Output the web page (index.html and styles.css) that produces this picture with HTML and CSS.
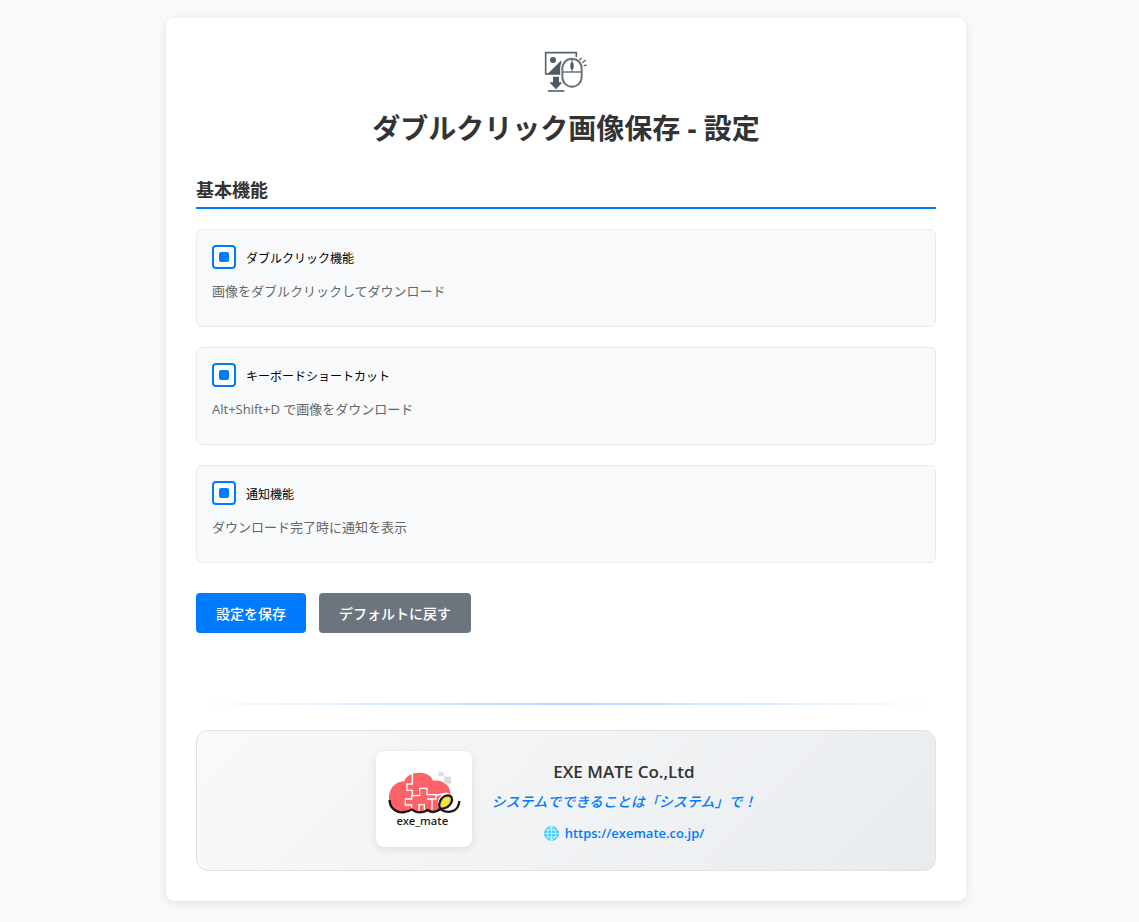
FILE: index.html
```html
<!DOCTYPE html>
<html lang="ja">
<head>
<meta charset="utf-8">
<meta name="viewport" content="width=device-width, initial-scale=1">
<title>ダブルクリック画像保存 - 設定</title>
<link rel="stylesheet" href="styles.css">
</head>
<body>
<main class="container">
  <header class="header">
    <svg class="app-icon" viewBox="21 24 144 144" fill="none" stroke="#5b656d" aria-hidden="true">
      <path d="M32 103V38H124V52" stroke-width="5"/>
      <path d="M31 102H80" stroke-width="5"/>
      <circle cx="54" cy="60" r="9" fill="#4f5b64" stroke="none"/>
      <path d="M38 102L79 61V102Z" fill="#4f5b64" stroke="none"/>
      <path d="M54 110H72V127H83L63 148L43 127H54Z" fill="#4f5b64" stroke="none"/>
      <path d="M39 153H88" stroke-width="5"/>
      <rect x="82" y="56" width="58" height="84" rx="29" fill="#fff" stroke="#fff" stroke-width="13"/>
      <rect x="82" y="56" width="58" height="84" rx="29" stroke="#6b747b" stroke-width="6"/>
      <path d="M82 96H140M111 56V96" stroke="#6b747b" stroke-width="4"/>
      <rect x="106" y="67" width="10" height="21" rx="5" fill="#4f5b64" stroke="none"/>
      <path d="M134 61L139 53M142 68L152 60M146 77L155 75" stroke-width="4"/>
    </svg>
    <h1 class="title">ダブルクリック画像保存 - 設定</h1>
  </header>

  <form class="settings">
    <h2 class="section-title">基本機能</h2>
    <div class="option">
      <label class="option-label"><input class="check" type="checkbox" checked>ダブルクリック機能</label>
      <p class="option-text">画像をダブルクリックしてダウンロード</p>
    </div>
    <div class="option">
      <label class="option-label"><input class="check" type="checkbox" checked>キーボードショートカット</label>
      <p class="option-text">Alt+Shift+D で画像をダウンロード</p>
    </div>
    <div class="option">
      <label class="option-label"><input class="check" type="checkbox" checked>通知機能</label>
      <p class="option-text">ダウンロード完了時に通知を表示</p>
    </div>
    <div class="actions">
      <button class="btn btn-primary" type="button">設定を保存</button>
      <button class="btn btn-secondary" type="button">デフォルトに戻す</button>
    </div>
  </form>

  <footer class="footer">
    <div class="company">
      <svg class="logo" viewBox="42 42 240 240" role="img" aria-label="exe_mate">
        <path d="M62 184C48 150 64 110 103 109C112 76 178 74 189 107C220 103 243 122 242 152L215 186C196 204 184 198 174 194C158 207 138 207 126 194C103 206 76 203 62 184Z" fill="#ff6266"/>
        <g fill="none" stroke="#fff" stroke-width="4">
          <path d="M127 84V117H111V136H127V154"/>
          <path d="M125 196V180H106V162H125V152H149V130H171V149H198V162H186V194"/>
          <path d="M147 197V179H163V196M171 162H186M198 151L232 144"/>
        </g>
        <path d="M206 80h15v14h-15zM222 95h21v21h-21z" fill="#dcdcdc"/>
        <ellipse cx="226" cy="172" rx="22" ry="29" fill="#fff" transform="rotate(20 226 172)"/>
        <path d="M214 189C207 170 221 149 238 153C252 162 235 190 214 189Z" fill="#f4e43b"/>
        <path d="M59 165C58 188 80 206 103 201Q116 200 125 193Q147 210 173 195Q191 208 211 192C250 189 254 152 235 151C211 151 201 183 214 194C232 206 266 203 268 168" fill="none" stroke="#1f1615" stroke-width="7" stroke-linejoin="round"/>
        <text class="logo-text" x="157" y="240" text-anchor="middle">exe_mate</text>
      </svg>
      <div class="company-info">
        <h3 class="company-name">EXE MATE Co.,Ltd</h3>
        <p class="slogan">システムでできることは「システム」で！</p>
        <a class="link" href="https://exemate.co.jp/">
          <svg class="globe" viewBox="0 0 30 30" fill="none" aria-hidden="true">
            <circle cx="15" cy="15" r="14" fill="#50c8fa" stroke="#2ea7d6" stroke-width="1"/>
            <path d="M15 1V29M1 15H29M4 8H26M4 22H26M15 1C4 8 4 22 15 29C26 22 26 8 15 1Z" stroke="#d4f4ff" stroke-width="2"/>
          </svg>https://exemate.co.jp/</a>
      </div>
    </div>
  </footer>
</main>
</body>
</html>
```
FILE: styles.css
```css
* { box-sizing: border-box; }
body {
  margin: 0;
  padding: 18px 27px 20px 20px;
  background: #f8f9fa;
  color: #333;
  font-family: "Open Sans", "Noto Sans CJK JP", sans-serif;
}
h1, h2, h3, p { margin: 0; }
.container {
  max-width: 800px;
  margin: 0 auto;
  padding: 30px;
  background: #fff;
  border-radius: 8px;
  box-shadow: 0 2px 10px rgba(0, 0, 0, 0.1);
}
.header { text-align: center; margin-bottom: 30px; }
.app-icon { display: block; width: 48px; height: 48px; margin: 0 auto 12px; }
.title { font-size: 28px; line-height: 40px; font-weight: 700; }
.section-title {
  margin-bottom: 20px;
  padding-bottom: 4px;
  border-bottom: 2px solid #007bff;
  font-size: 18px;
  line-height: 25px;
  font-weight: 700;
}
.option {
  margin-bottom: 20px;
  padding: 15px 15px 25px;
  background: #f8f9fa;
  border: 1px solid #e9ecef;
  border-radius: 6px;
}
.option-label {
  display: flex;
  align-items: flex-end;
  gap: 10px;
  margin-bottom: 12px;
  color: #000;
  font-size: 12px;
  line-height: 20px;
}
.check {
  display: grid;
  place-content: center;
  appearance: none;
  width: 24px;
  height: 24px;
  margin: 0;
  background: #fff;
  border: 2px solid #007bff;
  border-radius: 4px;
}
.check:checked::before {
  content: "";
  width: 10px;
  height: 10px;
  background: #007bff;
  border-radius: 2px;
}
.option-text { color: #666; font-size: 13px; line-height: 20px; }
.actions { display: flex; gap: 13px; margin-top: 30px; }
.btn {
  padding: 11px 20px 9px;
  border: 0;
  border-radius: 4px;
  color: #fff;
  font-family: inherit;
  font-size: 14px;
  line-height: 20px;
  font-weight: 500;
}
.btn-primary { background: #007bff; }
.btn-secondary { background: #6c757d; }
.footer { margin-top: 70px; }
.footer::before {
  content: "";
  display: block;
  height: 2px;
  margin-bottom: 25px;
  background: linear-gradient(90deg, transparent, #007bff, transparent);
  opacity: 0.3;
}
.company {
  display: flex;
  justify-content: center;
  align-items: flex-start;
  gap: 20px;
  padding: 20px 20px 23px;
  background: linear-gradient(135deg, #f8f9fa, #e9ecef);
  border: 1px solid #dee2e6;
  border-radius: 12px;
}
.logo {
  width: 96px;
  height: 96px;
  padding: 8px;
  background: #fff;
  border-radius: 8px;
  box-shadow: 0 2px 8px rgba(0, 0, 0, 0.1);
}
.logo-text { fill: #231815; font-family: "Noto Sans", sans-serif; font-size: 34px; font-weight: 500; }
.company-info { padding-top: 8px; text-align: center; }
.company-name { margin-bottom: 8px; font-size: 17px; line-height: 25px; font-weight: 600; }
.slogan { margin-bottom: 11px; color: #007bff; font-size: 14px; line-height: 20px; font-weight: 500; font-style: italic; }
.link {
  display: flex;
  justify-content: center;
  align-items: center;
  gap: 6px;
  color: #007bff;
  font-size: 13px;
  line-height: 20px;
  font-weight: 600;
  text-decoration: none;
}
.globe { width: 15px; height: 15px; }
```
